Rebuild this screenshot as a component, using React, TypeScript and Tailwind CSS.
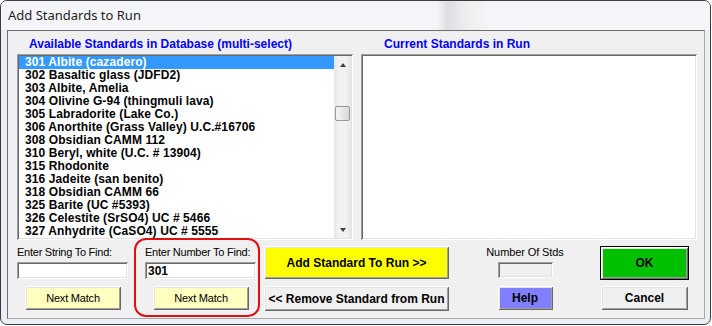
import React from "react";

const items = [
  "301 Albite (cazadero)",
  "302 Basaltic glass (JDFD2)",
  "303 Albite, Amelia",
  "304 Olivine G-94 (thingmuli lava)",
  "305 Labradorite (Lake Co.)",
  "306 Anorthite (Grass Valley) U.C.#16706",
  "308 Obsidian CAMM 112",
  "310 Beryl, white (U.C. # 13904)",
  "315 Rhodonite",
  "316 Jadeite (san benito)",
  "318 Obsidian CAMM 66",
  "325 Barite (UC #5393)",
  "326 Celestite (SrSO4) UC # 5466",
  "327 Anhydrite (CaSO4) UC # 5555",
];

const raised =
  "shadow-[inset_1px_1px_0_#ffffff,inset_-1px_-1px_0_#696969,inset_2px_2px_0_#e3e3e3,inset_-2px_-2px_0_#a0a0a0]";
const sunken =
  "shadow-[inset_1px_1px_0_#a0a0a0,inset_-1px_-1px_0_#ffffff,inset_2px_2px_0_#696969,inset_-2px_-2px_0_#e3e3e3]";

function ScrollBar() {
  return (
    <div className="w-[17px] h-full flex flex-col bg-[linear-gradient(90deg,#e6e6e6,#f2f2f2_30%,#f2f2f2_70%,#e6e6e6)]">
      <div className="h-[17px] flex items-center justify-center">
        <div className="w-0 h-0 border-l-[3.5px] border-r-[3.5px] border-b-[4px] border-l-transparent border-r-transparent border-b-[#404040]" />
      </div>
      <div className="mt-[33px] mx-[1px] h-[15px] rounded-[2px] border border-[#9a9a9a] bg-[linear-gradient(90deg,#f4f4f4,#e8e8e8_50%,#d8d8d8)]" />
      <div className="flex-1" />
      <div className="h-[17px] flex items-center justify-center">
        <div className="w-0 h-0 border-l-[3.5px] border-r-[3.5px] border-t-[4px] border-l-transparent border-r-transparent border-t-[#404040]" />
      </div>
    </div>
  );
}

export default function App() {
  return (
    <div className="w-[712px] h-[326px] bg-white font-['Liberation_Sans',Arial,sans-serif] text-black">
      <div className="w-[711px] h-[325px] border border-[#3c3c3c] rounded-[7px] bg-[#eceff3] flex flex-col overflow-hidden">
        <div className="h-[29px] pl-[7px] flex items-center text-[13px] font-['Noto_Sans',sans-serif] text-[#1e1e1e] bg-[linear-gradient(90deg,#f3f5f8_0%,#f3f5f8_61.5%,#dcdee1_63%,#eceef0_65.5%,#f3f5f8_69%)]">
          Add Standards to Run
        </div>
        <div className="ml-[6px] w-[698px] h-[289px] bg-[#f0f0f0] border border-t-[#6e6e6e] border-l-[#6e6e6e] border-r-[#a8a8a8] border-b-[#a8a8a8] flex flex-col">
          {/* lists */}
          <div className="flex pl-[9px] gap-[8px]">
            <div className="w-[336px] flex flex-col">
              <div className="h-[23px] pt-[6px] pl-[12px] leading-[14px] text-[12px] font-bold text-[#0000ff] whitespace-nowrap">
                Available Standards in Database (multi-select)
              </div>
              <div className={`h-[186px] bg-white p-[2px] flex ${sunken}`}>
                <div className="flex-1 flex flex-col overflow-hidden">
                  {items.map((it, i) => (
                    <div
                      key={it}
                      className={`h-[13px] leading-[13px] pl-[6px] text-[12px] tracking-[0.1px] font-bold whitespace-nowrap ${
                        i === 0 ? "bg-[#3399ff] text-white" : ""
                      }`}
                    >
                      {it}
                    </div>
                  ))}
                </div>
                <ScrollBar />
              </div>
            </div>
            <div className="w-[336px] flex flex-col">
              <div className="h-[23px] pt-[6px] pl-[23px] leading-[14px] text-[12px] font-bold text-[#0000ff] whitespace-nowrap">
                Current Standards in Run
              </div>
              <div className={`h-[186px] bg-white ${sunken}`} />
            </div>
          </div>

          {/* bottom controls */}
          <div className="flex items-start pl-[9px]">
            <div className="w-[111px] flex flex-col">
              <div className="mt-[6px] h-[12px] leading-[12px] text-[11px] tracking-[-0.25px] whitespace-nowrap">
                Enter String To Find:
              </div>
              <div className={`mt-[4px] h-[17px] bg-white ${sunken}`} />
              <div
                className={`mt-[7px] ml-[8px] w-[96px] h-[24px] bg-[#ffffc0] flex items-center justify-center text-[11px] tracking-[-0.2px] ${raised}`}
              >
                Next Match
              </div>
            </div>

            <div className="ml-[6px] -mt-[2px] w-[126px] h-[79px] border-2 border-[#e01010] rounded-[12px] pl-[9px] pt-[6px] flex flex-col">
              <div className="h-[12px] leading-[12px] text-[11px] tracking-[-0.25px] whitespace-nowrap">
                Enter Number To Find:
              </div>
              <div
                className={`mt-[4px] w-[111px] h-[17px] bg-white pl-[3px] flex items-center text-[12px] font-bold ${sunken}`}
              >
                301
              </div>
              <div
                className={`mt-[7px] ml-[8px] w-[96px] h-[24px] bg-[#ffffc0] flex items-center justify-center text-[11px] tracking-[-0.2px] ${raised}`}
              >
                Next Match
              </div>
            </div>

            <div className="ml-[4px] w-[185px] flex flex-col">
              <div
                className={`mt-[6px] h-[33px] bg-[#ffff00] flex items-center justify-center text-[12px] font-bold ${raised}`}
              >
                Add Standard To Run &gt;&gt;
              </div>
              <div
                className={`mt-[7px] h-[25px] bg-[#f0f0f0] flex items-center justify-center text-[12px] font-bold ${raised}`}
              >
                &lt;&lt; Remove Standard from Run
              </div>
            </div>

            <div className="ml-[38px] w-[76px] flex flex-col items-center">
              <div className="mt-[6px] h-[12px] leading-[12px] text-[11px] tracking-[-0.1px] whitespace-nowrap">
                Number Of Stds
              </div>
              <div className={`mt-[4px] w-[55px] h-[16px] bg-[#f0f0f0] ${sunken}`} />
              <div
                className={`mt-[8px] w-[55px] h-[24px] bg-[#8080ff] flex items-center justify-center text-[12px] font-bold ${raised}`}
              >
                Help
              </div>
            </div>

            <div className="ml-[37px] flex flex-col">
              <div className="mt-[6px] w-[89px] h-[34px] border border-black">
                <div
                  className={`w-full h-full bg-[#00c000] flex items-center justify-center text-[12px] font-bold ${raised}`}
                >
                  OK
                </div>
              </div>
              <div
                className={`mt-[6px] ml-[1px] w-[87px] h-[24px] bg-[#f0f0f0] flex items-center justify-center text-[12px] font-bold ${raised}`}
              >
                Cancel
              </div>
            </div>
          </div>
        </div>
      </div>
    </div>
  );
}
